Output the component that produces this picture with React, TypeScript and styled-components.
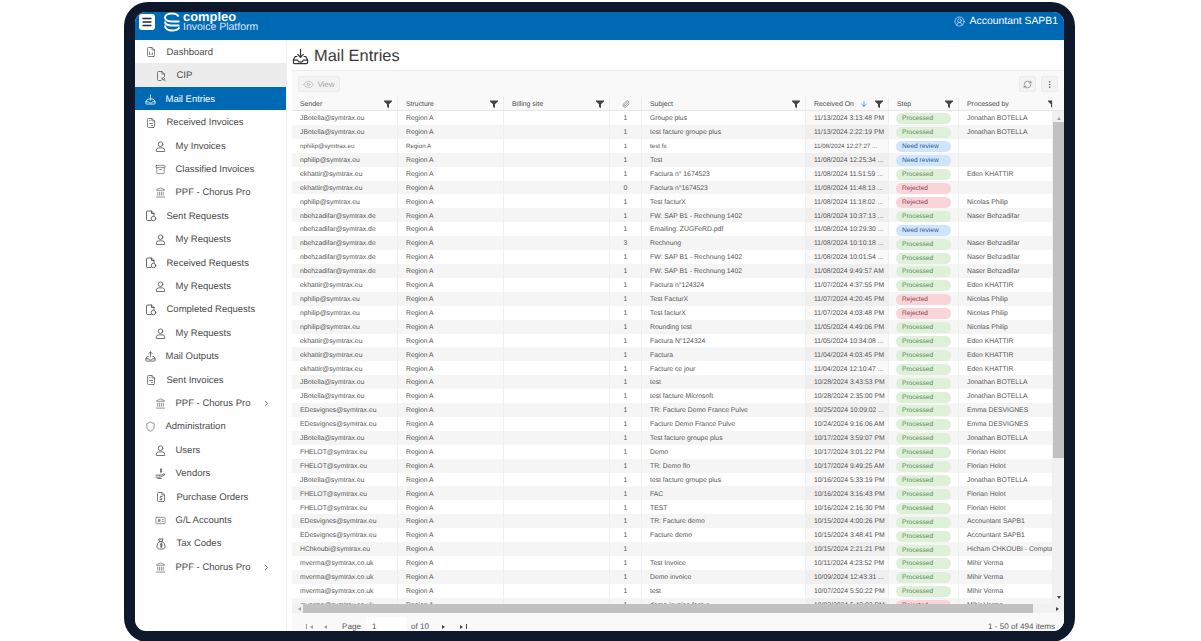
import { FC, ReactNode } from 'react';
import styled, { createGlobalStyle } from 'styled-components';
import {
  Archive,
  ArrowDown,
  ChevronRight,
  CircleUserRound,
  Eye,
  EllipsisVertical,
  IdCard,
  Landmark,
  Menu,
  Paperclip,
  RefreshCw,
  Shield,
} from 'lucide-react';
import { TbFileAnalytics, TbFileDollar, TbFileInvoice, TbFileSearch } from 'react-icons/tb';

const COLUMNS = '106px 106px 106px 32px 164px 83px 70px 94px';
const FONT = '"Liberation Sans", Arial, sans-serif';

const GlobalStyle = createGlobalStyle`
  html, body {
    margin: 0;
    padding: 0;
    background: #fff;
    overflow: hidden;
    font-family: ${FONT};
    text-rendering: geometricPrecision;
  }
`;

const Page = styled.div`
  width: 1201px;
  height: 641px;
  padding: 2px 0 0 124px;
  box-sizing: border-box;
  overflow: hidden;
`;

const Frame = styled.div`
  width: 951px;
  height: 640px;
  box-sizing: border-box;
  padding: 10px 11px;
  background: #0f172a;
  border-radius: 24px;
`;

const Screen = styled.div`
  display: flex;
  flex-direction: column;
  height: 619px;
  background: #fff;
  border-radius: 11px;
  overflow: hidden;
`;

const TopBar = styled.header`
  display: flex;
  align-items: center;
  flex: 0 0 28px;
  padding: 0 6px 0 4px;
  background: #0069b4;
  color: #fff;
`;

const MenuButton = styled.div`
  display: flex;
  align-items: center;
  justify-content: center;
  width: 16px;
  height: 16px;
  margin-top: -8px;
  background: #fff;
  border-radius: 3px;
  color: #1f2937;
`;

const Logo = styled.div`
  display: flex;
  align-items: center;
  gap: 3px;
  margin: -9px 0 0 9px;
`;

const LogoText = styled.div`
  display: flex;
  flex-direction: column;
`;

const LogoName = styled.span`
  font-size: 12.9px;
  font-weight: 700;
  line-height: 11px;
`;

const LogoProduct = styled.span`
  font-size: 10.5px;
  font-weight: 400;
  line-height: 10px;
  opacity: 0.85;
`;

const UserBox = styled.div`
  display: flex;
  align-items: center;
  gap: 5px;
  margin: -10px 0 0 auto;
  font-size: 10.4px;
`;

const Body = styled.div`
  display: flex;
  flex: 1;
  min-height: 0;
`;

const Sidebar = styled.nav`
  flex: 0 0 152px;
  box-sizing: border-box;
  border-right: 1px solid #f0f0f0;
`;

const NavRow = styled.div<{ $sub?: boolean; $active?: boolean; $selected?: boolean }>`
  display: flex;
  align-items: center;
  height: 23.42px;
  box-sizing: border-box;
  padding: 1.5px 0 0 ${props => (props.$sub ? '20px' : '10px')};
  gap: 9.5px;
  font-size: 9.5px;
  color: ${props => (props.$selected ? '#fff' : '#4a4a4a')};
  background: ${props =>
    props.$selected ? '#0069b4' : props.$active ? '#ececec' : 'transparent'};
`;

const NavIcon = styled.span`
  display: flex;
  justify-content: center;
  flex: 0 0 11px;
`;

const NavLabel = styled.span`
  flex: 1;
  white-space: nowrap;
`;

const NavArrow = styled.span`
  display: flex;
  margin-right: 15px;
  color: #444;
`;

const Main = styled.main`
  display: flex;
  flex-direction: column;
  flex: 1;
  min-width: 0;
  padding-left: 5px;
`;

const TitleRow = styled.div`
  display: flex;
  align-items: center;
  gap: 5px;
  flex: 0 0 30px;
  padding-top: 2px;
  box-sizing: border-box;
  color: #333;
`;

const Title = styled.h1`
  margin: 0;
  font-size: 16.4px;
  font-weight: 400;
  color: #3a3a3a;
`;

const Toolbar = styled.div`
  display: flex;
  align-items: center;
  flex: 0 0 27px;
  padding: 0 6px;
  gap: 5px;
  background: #f9f9f9;
  border-top: 1px solid #ececec;
  box-sizing: border-box;
`;

const ToolButton = styled.div<{ $square?: boolean }>`
  display: flex;
  align-items: center;
  justify-content: center;
  gap: 3px;
  width: ${props => (props.$square ? '17px' : '42px')};
  height: 16px;
  background: #f3f3f3;
  border: 1px solid #ececec;
  border-radius: 2px;
  box-sizing: border-box;
  font-size: 8px;
  color: ${props => (props.$square ? '#444' : '#a5a5a5')};
`;

const ToolSpacer = styled.div`
  flex: 1;
`;

const HeadRow = styled.div`
  display: grid;
  grid-template-columns: ${COLUMNS} 11px;
  flex: 0 0 14px;
  background: #f9f9f9;
  border-bottom: 1px solid #e6e6e6;
  box-sizing: border-box;
  font-size: 6.9px;
  color: #4a4a4a;
`;

const HeadCell = styled.div<{ $center?: boolean }>`
  display: flex;
  align-items: center;
  justify-content: ${props => (props.$center ? 'center' : 'flex-start')};
  padding: ${props => (props.$center ? '0' : '1px 5px 0 8px')};
  border-right: 1px solid #ececec;
  white-space: nowrap;
  overflow: hidden;
`;

const FilterSlot = styled.span<{ $clipped?: boolean }>`
  display: flex;
  flex: none;
  margin-left: auto;
  margin-right: ${props => (props.$clipped ? '-9px' : '0')};
`;

const SortSlot = styled.span`
  display: flex;
  margin-left: 6px;
  color: #0069b4;
`;

const GridBody = styled.div`
  display: flex;
  flex: 0 0 493px;
  min-height: 0;
`;

const Rows = styled.div`
  flex: 0 0 761px;
  overflow: hidden;
`;

const Row = styled.div<{ $alt: boolean; $small: boolean }>`
  display: grid;
  grid-template-columns: ${COLUMNS};
  grid-template-rows: 13.91px;
  background: ${props => (props.$alt ? '#f5f5f5' : '#fff')};
  font-size: ${props => (props.$small ? '6.2px' : '6.8px')};
  color: #555;
`;

const Cell = styled.div<{ $center?: boolean; $sorted?: boolean }>`
  display: flex;
  align-items: center;
  justify-content: ${props => (props.$center ? 'center' : 'flex-start')};
  padding: ${props => (props.$center ? '1.5px 0 0' : '1.5px 7px 0 8px')};
  box-sizing: border-box;
  border-right: 1px solid #efefef;
  white-space: nowrap;
  overflow: hidden;
  background: ${props => (props.$sorted ? 'rgba(0, 0, 0, 0.025)' : 'transparent')};
`;

const STEP_COLORS = {
  Processed: { bg: '#dff0d8', fg: '#5b8c5a' },
  'Need review': { bg: '#cfe5fd', fg: '#2b5c9a' },
  Rejected: { bg: '#f9d5da', fg: '#8f3f4a' },
};

type Step = keyof typeof STEP_COLORS;

const Pill = styled.span<{ $step: Step }>`
  display: block;
  width: 56px;
  height: 11px;
  line-height: 11.5px;
  padding-left: 6px;
  box-sizing: border-box;
  margin: 0.5px 0 0 -1px;
  border-radius: 6px;
  font-size: 6.6px;
  background: ${props => STEP_COLORS[props.$step].bg};
  color: ${props => STEP_COLORS[props.$step].fg};
`;

const VScroll = styled.div`
  display: flex;
  flex-direction: column;
  flex: 0 0 11px;
  background: #f1f1f1;
`;

const VThumb = styled.div`
  flex: 0 0 336px;
  background: #c1c1c1;
`;

const VGap = styled.div`
  flex: 1;
`;

const ScrollButton = styled.div`
  display: flex;
  align-items: center;
  justify-content: center;
  flex: 0 0 11px;
  color: #8a8a8a;
`;

const HScroll = styled.div`
  display: flex;
  flex: 0 0 9px;
  background: #f1f1f1;
`;

const HThumb = styled.div`
  flex: 0 0 730px;
  background: #c1c1c1;
`;

const Triangle = styled.span<{ $dir: 'up' | 'down' | 'left' | 'right'; $dark?: boolean }>`
  width: 0;
  height: 0;
  border: 2.5px solid transparent;
  border-width: ${props => (props.$dir === 'left' || props.$dir === 'right' ? '2.5px 3px' : '3px 2.5px')};
  ${props => {
    const color = props.$dark ? '#444' : '#a0a0a0';
    const side = { up: 'bottom', down: 'top', left: 'right', right: 'left' }[props.$dir];
    return `border-${side}-color: ${color};`;
  }}
`;

const Pager = styled.footer`
  display: flex;
  align-items: center;
  flex: 0 0 26px;
  padding: 1px 9px 0 14px;
  box-sizing: border-box;
  background: #f9f9f9;
  font-size: 8.1px;
  color: #555;
`;

const PagerIcon = styled.span<{ $before?: number; $after?: number }>`
  display: flex;
  align-items: center;
  margin-left: ${props => props.$before ?? 0}px;
  margin-right: ${props => props.$after ?? 0}px;
`;

const PageInput = styled.div`
  width: 40px;
  height: 20px;
  margin: 0 5px;
  padding-left: 6px;
  line-height: 20px;
  box-sizing: border-box;
  background: #fff;
  border-radius: 2px;
`;

const PagerBar = styled.span<{ $dark?: boolean }>`
  width: 1px;
  height: 5px;
  background: ${props => (props.$dark ? '#444' : '#a0a0a0')};
`;

const PagerTotal = styled.span`
  margin-left: auto;
`;

const ICON = { size: 11, strokeWidth: 1.3 };
const TB = { size: 12, strokeWidth: 1.4 };

const LineIcon: FC<{ size?: number; children: ReactNode }> = ({ size = 11, children }) => (
  <svg
    width={size}
    height={size}
    viewBox="0 0 24 24"
    fill="none"
    stroke="currentColor"
    strokeWidth={1.7}
    strokeLinecap="round"
    strokeLinejoin="round"
  >
    {children}
  </svg>
);

const TrayIcon: FC<{ up?: boolean; size?: number }> = ({ up, size = 12 }) => (
  <LineIcon size={size}>
    <path d="M12 2v11" />
    {up ? <path d="M8 6l4-4 4 4" /> : <path d="M8 9l4 4 4-4" />}
    <path d="M7 12H4.500L2 17v3.500A1.500 1.500 0 0 0 3.500 22h17a1.500 1.500 0 0 0 1.500-1.500V17l-2.500-5H17" />
    <path d="M2 17h6c.5 2 2 3 4 3s3.500-1 4-3h6" />
  </LineIcon>
);

const PersonIcon: FC = () => (
  <LineIcon>
    <circle cx="12" cy="7" r="5" />
    <path d="M3 22v-2a5 5 0 0 1 5-5h8a5 5 0 0 1 5 5v2z" />
  </LineIcon>
);

const RequestIcon: FC = () => (
  <LineIcon size={12}>
    <path d="M12 21H5a2 2 0 0 1-2-2V4a2 2 0 0 1 2-2h8l5 5v4" />
    <path d="M13 2v5h5" />
    <circle cx="17" cy="17" r="4.500" />
  </LineIcon>
);

const VendorIcon: FC = () => (
  <LineIcon>
    <path d="M15 3.500c-.8-1-3.500-1-3.500.7 0 1.800 3.500 1 3.500 2.800 0 1.700-2.800 1.700-3.500.6" />
    <path d="M13 1.500v9" />
    <path d="M2 20h9l4-2 7-4-3-1-6 2.500H10" />
    <path d="M2 15.500h5l3 .5" />
    <path d="M6 23h8" />
  </LineIcon>
);

const TaxIcon: FC = () => (
  <LineIcon size={12}>
    <path d="M8 2h8l-2 5h-4z" />
    <path d="M10 7C6 9 4 13 4 17c0 3 2 5 5 5h6c3 0 5-2 5-5 0-4-2-8-6-10" />
    <path d="M14.500 12c-.8-1-4-1-4 .8 0 2 4 1 4 3 0 1.700-3.200 1.700-4 .7" />
    <path d="M12.500 10v9" />
  </LineIcon>
);

const FilterIcon: FC = () => (
  <svg width="8" height="8" viewBox="0 0 8 8" fill="#444">
    <path d="M0 .5h8v1L5 4.200V8L3 7V4.200L0 1.500z" />
  </svg>
);

const LogoMark: FC = () => (
  <svg width="16" height="20" viewBox="0 0 16 20" fill="none" stroke="#fff" strokeWidth="2">
    <path d="M14.500 4.500C13.500 2.500 11 1.500 8 1.500 4 1.500 1 3.200 1 5.500 1 7.800 4 9.500 8 9.500h7.500" />
    <path d="M1 9.500c0 2.500 3 4 7 4h7.500" />
    <path d="M1 13.500c0 3 3 5 7 5 3 0 6-1 7.500-3" />
  </svg>
);

interface NavEntry {
  label: string;
  icon: ReactNode;
  sub?: boolean;
  active?: boolean;
  selected?: boolean;
  arrow?: boolean;
}

const NAV: NavEntry[] = [
  { label: 'Dashboard', icon: <TbFileAnalytics {...TB} /> },
  { label: 'CIP', icon: <TbFileSearch {...TB} />, sub: true, active: true },
  { label: 'Mail Entries', icon: <TrayIcon size={11} />, selected: true },
  { label: 'Received Invoices', icon: <TbFileInvoice {...TB} /> },
  { label: 'My Invoices', icon: <PersonIcon />, sub: true },
  { label: 'Classified Invoices', icon: <Archive {...ICON} />, sub: true },
  { label: 'PPF - Chorus Pro', icon: <Landmark {...ICON} />, sub: true },
  { label: 'Sent Requests', icon: <RequestIcon /> },
  { label: 'My Requests', icon: <PersonIcon />, sub: true },
  { label: 'Received Requests', icon: <RequestIcon /> },
  { label: 'My Requests', icon: <PersonIcon />, sub: true },
  { label: 'Completed Requests', icon: <RequestIcon /> },
  { label: 'My Requests', icon: <PersonIcon />, sub: true },
  { label: 'Mail Outputs', icon: <TrayIcon up size={11} /> },
  { label: 'Sent Invoices', icon: <TbFileInvoice {...TB} /> },
  { label: 'PPF - Chorus Pro', icon: <Landmark {...ICON} />, sub: true, arrow: true },
  { label: 'Administration', icon: <Shield {...ICON} /> },
  { label: 'Users', icon: <PersonIcon />, sub: true },
  { label: 'Vendors', icon: <VendorIcon />, sub: true },
  { label: 'Purchase Orders', icon: <TbFileDollar {...TB} />, sub: true },
  { label: 'G/L Accounts', icon: <IdCard {...ICON} />, sub: true },
  { label: 'Tax Codes', icon: <TaxIcon />, sub: true },
  { label: 'PPF - Chorus Pro', icon: <Landmark {...ICON} />, sub: true, arrow: true },
];

const JB = 'JBotella@symtrax.eu';
const NP = 'nphilip@symtrax.eu';
const EK = 'ekhattir@symtrax.eu';
const NB = 'nbehzadifar@symtrax.de';
const ED = 'EDesvignes@symtrax.eu';
const FH = 'FHELOT@symtrax.eu';
const MV = 'mverma@symtrax.co.uk';

const JONATHAN = 'Jonathan BOTELLA';
const EDEN = 'Eden KHATTIR';
const NICOLAS = 'Nicolas Philip';
const NASER = 'Naser Behzadifar';
const EMMA = 'Emma DESVIGNES';
const FLORIAN = 'Florian Helot';
const ACCOUNTANT = 'Accountant SAPB1';
const MIHIR = 'Mihir Verma';

type Entry = [string, number, string, string, Step, string];

const ENTRIES: Entry[] = [
  [JB, 1, 'Groupe plus', '11/13/2024 3:13:48 PM', 'Processed', JONATHAN],
  [JB, 1, 'test facture groupe plus', '11/13/2024 2:22:19 PM', 'Processed', JONATHAN],
  [NP, 1, 'test fx', '11/08/2024 12:27:27 ...', 'Need review', ''],
  [NP, 1, 'Test', '11/08/2024 12:25:34 ...', 'Need review', ''],
  [EK, 1, 'Factura n° 1674523', '11/08/2024 11:51:59 ...', 'Processed', EDEN],
  [EK, 0, 'Factura n°1674523', '11/08/2024 11:48:13 ...', 'Rejected', ''],
  [NP, 1, 'Test facturX', '11/08/2024 11:18:02 ...', 'Rejected', NICOLAS],
  [NB, 1, 'FW: SAP B1 - Rechnung 1402', '11/08/2024 10:37:13 ...', 'Processed', NASER],
  [NB, 1, 'Emailing: ZUGFeRD.pdf', '11/08/2024 10:29:30 ...', 'Need review', ''],
  [NB, 3, 'Rechnung', '11/08/2024 10:10:18 ...', 'Processed', NASER],
  [NB, 1, 'FW: SAP B1 - Rechnung 1402', '11/08/2024 10:01:54 ...', 'Processed', NASER],
  [NB, 1, 'FW: SAP B1 - Rechnung 1402', '11/08/2024 9:49:57 AM', 'Processed', NASER],
  [EK, 1, 'Factura n°124324', '11/07/2024 4:37:55 PM', 'Processed', EDEN],
  [NP, 1, 'Test FacturX', '11/07/2024 4:20:45 PM', 'Rejected', NICOLAS],
  [NP, 1, 'Test facturX', '11/07/2024 4:03:48 PM', 'Rejected', NICOLAS],
  [NP, 1, 'Rounding test', '11/05/2024 4:49:06 PM', 'Processed', NICOLAS],
  [EK, 1, 'Factura N°124324', '11/05/2024 10:34:08 ...', 'Processed', EDEN],
  [EK, 1, 'Factura', '11/04/2024 4:03:45 PM', 'Processed', EDEN],
  [EK, 1, 'Facture ce jour', '11/04/2024 12:10:47 ...', 'Processed', EDEN],
  [JB, 1, 'test', '10/28/2024 3:43:53 PM', 'Processed', JONATHAN],
  [JB, 1, 'test facture Microsoft', '10/28/2024 2:35:00 PM', 'Processed', JONATHAN],
  [ED, 1, 'TR: Facture Demo France Pulve', '10/25/2024 10:09:02 ...', 'Processed', EMMA],
  [ED, 1, 'Facture Demo France Pulve', '10/24/2024 9:16:06 AM', 'Processed', EMMA],
  [JB, 1, 'Test facture groupe plus', '10/17/2024 3:59:07 PM', 'Processed', JONATHAN],
  [FH, 1, 'Demo', '10/17/2024 3:01:22 PM', 'Processed', FLORIAN],
  [FH, 1, 'TR: Demo flo', '10/17/2024 9:49:25 AM', 'Processed', FLORIAN],
  [JB, 1, 'test facture groupe plus', '10/16/2024 5:33:19 PM', 'Processed', JONATHAN],
  [FH, 1, 'FAC', '10/16/2024 3:16:43 PM', 'Processed', FLORIAN],
  [FH, 1, 'TEST', '10/16/2024 2:16:30 PM', 'Processed', FLORIAN],
  [ED, 1, 'TR: Facture demo', '10/15/2024 4:00:26 PM', 'Processed', ACCOUNTANT],
  [ED, 1, 'Facture demo', '10/15/2024 3:48:41 PM', 'Processed', ACCOUNTANT],
  ['HChkoubi@symtrax.eu', 1, '', '10/15/2024 2:21:21 PM', 'Processed', 'Hicham CHKOUBI - Comptabl'],
  [MV, 1, 'Test Invoice', '10/11/2024 4:23:52 PM', 'Processed', MIHIR],
  [MV, 1, 'Demo invoice', '10/09/2024 12:43:31 ...', 'Processed', MIHIR],
  [MV, 1, 'test', '10/07/2024 5:50:22 PM', 'Processed', MIHIR],
  [MV, 1, 'demo invoice factur', '10/03/2024 5:43:03 PM', 'Rejected', MIHIR],
];

const App: FC = () => {
  return (
    <Page>
      <GlobalStyle />
      <Frame>
        <Screen>
          <TopBar>
            <MenuButton>
              <Menu size={12} strokeWidth={2.6} />
            </MenuButton>
            <Logo>
              <LogoMark />
              <LogoText>
                <LogoName>compleo</LogoName>
                <LogoProduct>Invoice Platform</LogoProduct>
              </LogoText>
            </Logo>
            <UserBox>
              <CircleUserRound size={11} strokeWidth={1.3} />
              Accountant SAPB1
            </UserBox>
          </TopBar>
          <Body>
            <Sidebar>
              {NAV.map((entry, index) => (
                <NavRow
                  key={index}
                  $sub={entry.sub}
                  $active={entry.active}
                  $selected={entry.selected}
                >
                  <NavIcon>{entry.icon}</NavIcon>
                  <NavLabel>{entry.label}</NavLabel>
                  {entry.arrow && (
                    <NavArrow>
                      <ChevronRight size={9} strokeWidth={2} />
                    </NavArrow>
                  )}
                </NavRow>
              ))}
            </Sidebar>
            <Main>
              <TitleRow>
                <TrayIcon size={17} />
                <Title>Mail Entries</Title>
              </TitleRow>
              <Toolbar>
                <ToolButton>
                  <Eye size={11} strokeWidth={1.2} />
                  View
                </ToolButton>
                <ToolSpacer />
                <ToolButton $square>
                  <RefreshCw size={9} strokeWidth={1.3} />
                </ToolButton>
                <ToolButton $square>
                  <EllipsisVertical size={9} strokeWidth={1.6} />
                </ToolButton>
              </Toolbar>
              <HeadRow>
                <HeadCell>
                  Sender
                  <FilterSlot>
                    <FilterIcon />
                  </FilterSlot>
                </HeadCell>
                <HeadCell>
                  Structure
                  <FilterSlot>
                    <FilterIcon />
                  </FilterSlot>
                </HeadCell>
                <HeadCell>
                  Billing site
                  <FilterSlot>
                    <FilterIcon />
                  </FilterSlot>
                </HeadCell>
                <HeadCell $center>
                  <Paperclip size={8} strokeWidth={1.5} />
                </HeadCell>
                <HeadCell>
                  Subject
                  <FilterSlot>
                    <FilterIcon />
                  </FilterSlot>
                </HeadCell>
                <HeadCell>
                  Received On
                  <SortSlot>
                    <ArrowDown size={8} strokeWidth={1.8} />
                  </SortSlot>
                  <FilterSlot>
                    <FilterIcon />
                  </FilterSlot>
                </HeadCell>
                <HeadCell>
                  Step
                  <FilterSlot>
                    <FilterIcon />
                  </FilterSlot>
                </HeadCell>
                <HeadCell>
                  Processed by
                  <FilterSlot $clipped>
                    <FilterIcon />
                  </FilterSlot>
                </HeadCell>
                <HeadCell />
              </HeadRow>
              <GridBody>
                <Rows>
                  {ENTRIES.map(([sender, files, subject, received, step, by], index) => (
                    <Row key={index} $alt={index % 2 === 1} $small={index === 2}>
                      <Cell>{sender}</Cell>
                      <Cell>Region A</Cell>
                      <Cell />
                      <Cell $center>{files}</Cell>
                      <Cell>{subject}</Cell>
                      <Cell $sorted>{received}</Cell>
                      <Cell>
                        <Pill $step={step}>{step}</Pill>
                      </Cell>
                      <Cell>{by}</Cell>
                    </Row>
                  ))}
                </Rows>
                <VScroll>
                  <ScrollButton>
                    <Triangle $dir="up" />
                  </ScrollButton>
                  <VThumb />
                  <VGap />
                  <ScrollButton>
                    <Triangle $dir="down" $dark />
                  </ScrollButton>
                </VScroll>
              </GridBody>
              <HScroll>
                <ScrollButton>
                  <Triangle $dir="left" />
                </ScrollButton>
                <HThumb />
                <VGap />
                <ScrollButton>
                  <Triangle $dir="right" $dark />
                </ScrollButton>
              </HScroll>
              <Pager>
                <PagerIcon $after={8}>
                  <PagerBar />
                  <Triangle $dir="left" />
                </PagerIcon>
                <PagerIcon $after={15}>
                  <Triangle $dir="left" />
                </PagerIcon>
                Page
                <PageInput>1</PageInput>
                of 10
                <PagerIcon $before={13.5} $after={12}>
                  <Triangle $dir="right" $dark />
                </PagerIcon>
                <PagerIcon>
                  <Triangle $dir="right" $dark />
                  <PagerBar $dark />
                </PagerIcon>
                <PagerTotal>1 - 50 of 494 items</PagerTotal>
              </Pager>
            </Main>
          </Body>
        </Screen>
      </Frame>
    </Page>
  );
};

export default App;
